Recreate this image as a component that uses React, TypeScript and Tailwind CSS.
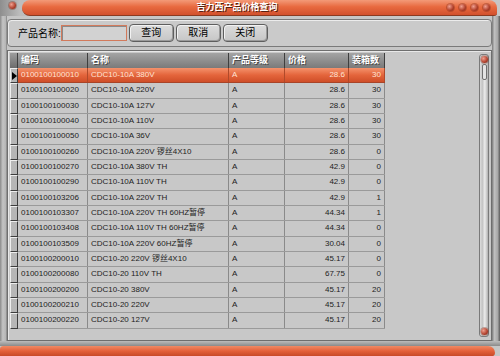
import React from "react";

type Row = [string, string, string, string, string];

const rows: Row[] = [
  ["0100100100010", "CDC10-10A 380V", "A", "28.6", "30"],
  ["0100100100020", "CDC10-10A 220V", "A", "28.6", "30"],
  ["0100100100030", "CDC10-10A 127V", "A", "28.6", "30"],
  ["0100100100040", "CDC10-10A 110V", "A", "28.6", "30"],
  ["0100100100050", "CDC10-10A 36V", "A", "28.6", "30"],
  ["0100100100260", "CDC10-10A 220V 锣丝4X10", "A", "28.6", "0"],
  ["0100100100270", "CDC10-10A 380V TH", "A", "42.9", "0"],
  ["0100100100290", "CDC10-10A 110V TH", "A", "42.9", "0"],
  ["0100100103206", "CDC10-10A 220V TH", "A", "42.9", "1"],
  ["0100100103307", "CDC10-10A 220V TH 60HZ暂停", "A", "44.34", "1"],
  ["0100100103408", "CDC10-10A 110V TH 60HZ暂停", "A", "44.34", "0"],
  ["0100100103509", "CDC10-10A 220V 60HZ暂停", "A", "30.04", "0"],
  ["0100100200010", "CDC10-20 220V 锣丝4X10", "A", "45.17", "0"],
  ["0100100200080", "CDC10-20 110V TH", "A", "67.75", "0"],
  ["0100100200200", "CDC10-20 380V", "A", "45.17", "20"],
  ["0100100200210", "CDC10-20 220V", "A", "45.17", "20"],
  ["0100100200220", "CDC10-20 127V", "A", "45.17", "20"],
];

function Dot({ cls }: { cls: string }) {
  return (
    <div
      className={
        "w-[7px] h-[7px] rounded-full bg-[radial-gradient(circle_at_35%_35%,#f0a090,#b0402c_60%,#6a2418)] shadow-[0_0_0_1px_rgba(120,40,20,0.35)] " +
        cls
      }
    />
  );
}

function Btn({ label }: { label: string }) {
  return (
    <div className="w-[45px] h-[18px] rounded-[4px] border border-[#5e5e5e] bg-[linear-gradient(#dcdcdc,#c6c6c6)] shadow-[inset_1px_1px_0_#f2f2f2,inset_-1px_-1px_0_#9a9a9a] flex items-center justify-center text-[10px] text-black leading-none">
      {label}
    </div>
  );
}

export default function App() {
  const font = "font-['Liberation_Sans','Noto_Sans_CJK_SC',sans-serif]";
  return (
    <div className={"w-[500px] h-[356px] bg-[#c6c6c6] flex flex-col overflow-hidden " + font}>
      {/* title bar */}
      <div className="h-[16px] flex bg-[linear-gradient(90deg,#8e8e8e,#bdbdbd_4%,#c6c6c6)]">
        <div className="w-[22px] flex items-start pl-[9px] pt-[2px]">
          <Dot cls="" />
        </div>
        <div className="flex-1 mr-[3px] rounded-l-[8px] rounded-tr-[8px] rounded-br-[3px] bg-[linear-gradient(#f39a78,#e86a40_45%,#d2502c)] border-b border-[#8a3a20] relative flex items-center justify-center">
          <span className="text-[9px] font-bold text-white tracking-[0px] [text-shadow:1px_1px_0_#5a2010] ml-[-45px]">
            吉力西产品价格查询
          </span>
          <div className="absolute right-[7px] top-[4px] flex gap-[5px]">
            <Dot cls="" />
            <Dot cls="" />
            <Dot cls="" />
            <Dot cls="" />
          </div>
        </div>
      </div>

      {/* body */}
      <div className="flex-1 flex">
        <div className="w-[7px] bg-[linear-gradient(90deg,#8a8a8a,#c4c4c4_40%,#b4b4b4_85%,#747474)]" />
        <div className="flex-1 flex flex-col pt-[3px]">
          {/* toolbar */}
          <div className="h-[28px] rounded-[4px] border border-[#7a7a7a] shadow-[inset_1px_1px_0_#ececec] bg-[#cacaca] flex items-center pl-[10px] gap-[2px]">
            <span className="text-[10px] text-black tracking-[0px] mr-[-2px]">产品名称:</span>
            <div className="w-[66px] h-[16px] border border-[#d27a5c] bg-[#d2d2d2] shadow-[inset_1px_1px_0_#8a8a8a] mr-[0px]" />
            <Btn label="查询" />
            <Btn label="取消" />
            <Btn label="关闭" />
          </div>

          {/* grid */}
          <div className="mt-[3px] h-[291px] border border-[#6e6e6e] shadow-[inset_1px_1px_0_#e8e8e8] bg-[#c8c8c8] flex pl-[2px] pt-[2px]">
            <div className="flex-1 flex flex-col">
              {/* header */}
              <div className="h-[15px] flex text-[9px] font-bold text-white leading-none">
                <div className="w-[8px] bg-[linear-gradient(#9c9c9c,#6c6c6c)] border-r border-[#3e3e3e]" />
                {[
                  ["编码", "w-[70px]"],
                  ["名称", "w-[141px]"],
                  ["产品等级", "w-[56px]"],
                  ["价格", "w-[64px]"],
                  ["装箱数", "w-[36px]"],
                ].map(([t, w]) => (
                  <div
                    key={t}
                    className={
                      w +
                      " bg-[linear-gradient(#a4a4a4,#7a7a7a)] border-r border-[#3e3e3e] flex items-center pl-[3px] [text-shadow:1px_1px_0_#4a4a4a]"
                    }
                  >
                    {t}
                  </div>
                ))}
              </div>
              {/* rows */}
              {rows.map((r, i) => {
                const sel = i === 0;
                const rowCls = sel
                  ? "bg-[linear-gradient(#f4926c,#e4653c_50%,#cf4e28)] text-[#ffe2d4]"
                  : "text-[#222222]";
                const cell = sel ? "border-r border-[#b04a2a]" : "border-r border-[#8a8a8a]";
                return (
                  <div key={r[0]} className="h-[15.33px] flex text-[8px] leading-none">
                    <div className="w-[8px] bg-[#b6b6b6] border-t border-l border-[#eeeeee] border-r-[#3c3c3c] border-b-[#3c3c3c] border-r border-b flex items-center justify-center">
                      {sel && (
                        <svg width="5" height="8" viewBox="0 0 5 8">
                          <path d="M0 0 L5 4 L0 8 Z" fill="#000" />
                        </svg>
                      )}
                    </div>
                    <div className={"flex border-b " + (sel ? "border-[#a84428] " : "border-[#9a9a9a] ") + rowCls}>
                      <div className={"w-[70px] flex items-center pl-[3px] " + cell}>{r[0]}</div>
                      <div className={"w-[141px] flex items-center pl-[3px] " + cell}>{r[1]}</div>
                      <div className={"w-[56px] flex items-center pl-[3px] " + cell}>{r[2]}</div>
                      <div className={"w-[64px] flex items-center justify-end pr-[3px] " + cell}>{r[3]}</div>
                      <div className={"w-[36px] flex items-center justify-end pr-[3px] " + cell}>{r[4]}</div>
                    </div>
                  </div>
                );
              })}
            </div>
            {/* scrollbar */}
            <div className="w-[10px] mr-[2px] mb-[3px] mt-[1px] rounded-[3px] border border-[#7a7a7a] bg-[linear-gradient(90deg,#dcdcdc,#c4c4c4_30%,#ececec_60%,#b0b0b0)] flex flex-col items-center justify-between py-[1px]">
              <div className="flex flex-col items-center">
                <Dot cls="" />
                <div className="w-[5px] h-[16px] mt-[1px] rounded-[2px] border border-[#707070] bg-[#e4e4e4]" />
              </div>
              <Dot cls="" />
            </div>
          </div>
        </div>
        <div className="w-[8px] bg-[linear-gradient(90deg,#7a7a7a,#c0c0c0_30%,#a8a8a8_70%,#5a5a5a)]" />
      </div>

      {/* bottom */}
      <div className="h-[5px] bg-[linear-gradient(#bcbcbc,#8a8a8a)]" />
      <div className="h-[10px] mr-[5px] rounded-tr-[8px] rounded-br-[4px] rounded-tl-[4px] bg-[linear-gradient(#f08a64,#e4603a_50%,#c84a28)]" />
    </div>
  );
}
